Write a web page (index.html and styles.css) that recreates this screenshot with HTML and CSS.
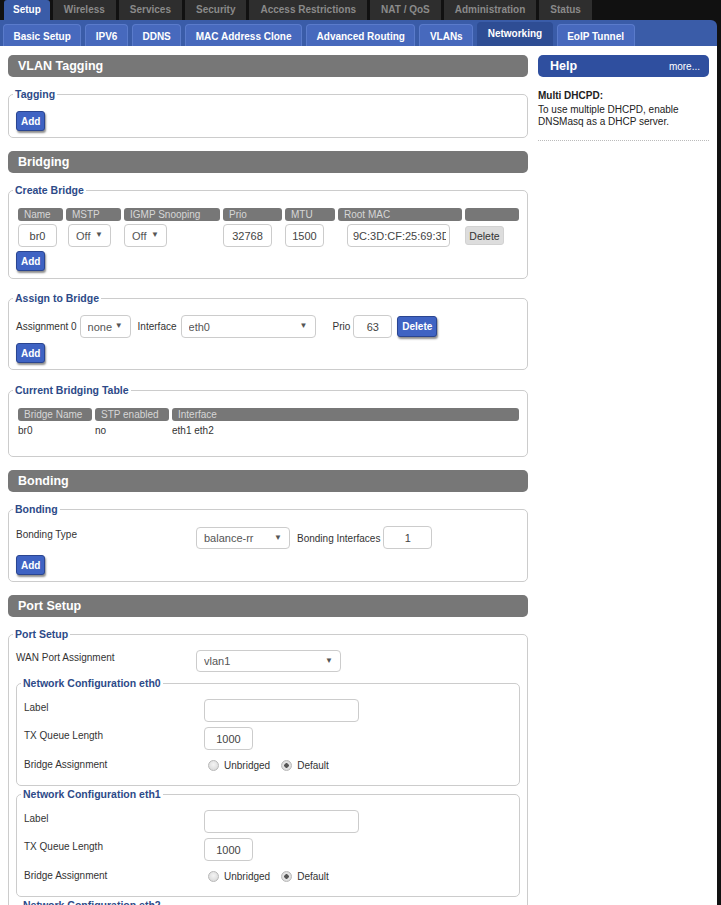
FILE: index.html
```html
<!DOCTYPE html>
<html lang="en">
<head>
    <meta charset="UTF-8">
    <meta name="viewport" content="width=device-width, initial-scale=1.0">
    <link rel="stylesheet" href="styles.css">
    <title>Networking</title>
</head>
<body>
<div class="page">
    <ul class="menu">
        <li class="on">Setup</li>
        <li>Wireless</li>
        <li>Services</li>
        <li>Security</li>
        <li>Access Restrictions</li>
        <li>NAT / QoS</li>
        <li>Administration</li>
        <li>Status</li>
    </ul>
    <ul class="submenu">
        <li>Basic Setup</li>
        <li>IPV6</li>
        <li>DDNS</li>
        <li>MAC Address Clone</li>
        <li>Advanced Routing</li>
        <li>VLANs</li>
        <li class="on">Networking</li>
        <li>EoIP Tunnel</li>
    </ul>

    <div class="main">
        <div class="content">
            <h2 class="sec">VLAN Tagging</h2>
            <fieldset>
                <legend>Tagging</legend>
                <div class="first"><button class="btn">Add</button></div>
            </fieldset>

            <h2 class="sec">Bridging</h2>
            <fieldset class="create">
                <legend>Create Bridge</legend>
                <div class="bridges">
                    <div class="th">Name</div>
                    <div class="th">MSTP</div>
                    <div class="th">IGMP Snooping</div>
                    <div class="th">Prio</div>
                    <div class="th">MTU</div>
                    <div class="th">Root MAC</div>
                    <div class="th"></div>

                    <div><input class="txt w39" value="br0"></div>
                    <div><span class="sel mstp"><select><option>Off</option></select></span></div>
                    <div><span class="sel w43"><select><option>Off</option></select></span></div>
                    <div><input class="txt w49" value="32768"></div>
                    <div><input class="txt w39" value="1500"></div>
                    <div><input class="txt mac" value="9C:3D:CF:25:69:3D"></div>
                    <div><button class="btn-grey">Delete</button></div>
                </div>
                <div class="next"><button class="btn">Add</button></div>
            </fieldset>

            <fieldset>
                <legend>Assign to Bridge</legend>
                <div class="assign first">
                    <span>Assignment 0</span>
                    <span class="sel assign-sel"><select><option>none</option></select></span>
                    <span class="assign-if">Interface</span>
                    <span class="sel if-sel"><select><option>eth0</option></select></span>
                    <span class="assign-prio">Prio</span>
                    <input class="txt w39 prio" value="63">
                    <button class="btn del">Delete</button>
                </div>
                <div class="next2"><button class="btn">Add</button></div>
            </fieldset>

            <fieldset class="current">
                <legend>Current Bridging Table</legend>
                <div class="bridge-table">
                    <div class="th">Bridge Name</div>
                    <div class="th">STP enabled</div>
                    <div class="th">Interface</div>
                    <div class="td">br0</div>
                    <div class="td">no</div>
                    <div class="td">eth1 eth2</div>
                </div>
            </fieldset>

            <h2 class="sec">Bonding</h2>
            <fieldset>
                <legend>Bonding</legend>
                <div class="row bond">
                    <div class="label">Bonding Type</div>
                    <span class="sel bond-sel"><select><option>balance-rr</option></select></span>
                    <span class="bond-if">Bonding Interfaces</span>
                    <input class="txt w49" value="1">
                </div>
                <div class="next3"><button class="btn">Add</button></div>
            </fieldset>

            <h2 class="sec">Port Setup</h2>
            <fieldset class="ports">
                <legend>Port Setup</legend>
                <div class="row wan">
                    <div class="label">WAN Port Assignment</div>
                    <span class="sel wan-sel"><select><option>vlan1</option></select></span>
                </div>

                <fieldset class="iface">
                    <legend>Network Configuration eth0</legend>
                    <div class="row r-label">
                        <div class="label">Label</div>
                        <input class="txt w155" value="">
                    </div>
                    <div class="row r-tx">
                        <div class="label">TX Queue Length</div>
                        <input class="txt w49" value="1000">
                    </div>
                    <div class="row r-bridge">
                        <div class="label">Bridge Assignment</div>
                        <div class="radios">
                            <input type="radio" name="br_eth0"> <span>Unbridged</span>
                            <input type="radio" name="br_eth0" checked> <span>Default</span>
                        </div>
                    </div>
                </fieldset>

                <fieldset class="iface">
                    <legend>Network Configuration eth1</legend>
                    <div class="row r-label">
                        <div class="label">Label</div>
                        <input class="txt w155" value="">
                    </div>
                    <div class="row r-tx">
                        <div class="label">TX Queue Length</div>
                        <input class="txt w49" value="1000">
                    </div>
                    <div class="row r-bridge">
                        <div class="label">Bridge Assignment</div>
                        <div class="radios">
                            <input type="radio" name="br_eth1"> <span>Unbridged</span>
                            <input type="radio" name="br_eth1" checked> <span>Default</span>
                        </div>
                    </div>
                </fieldset>

                <fieldset class="iface">
                    <legend>Network Configuration eth2</legend>
                    <div class="row r-label">
                        <div class="label">Label</div>
                        <input class="txt w155" value="">
                    </div>
                </fieldset>
            </fieldset>
        </div>

        <div class="help">
            <div class="help-head">
                <span class="help-title">Help</span>
                <span class="help-more">more...</span>
            </div>
            <div class="help-body">
                <b>Multi DHCPD:</b>
                To use multiple DHCPD, enable DNSMasq as a DHCP server.
            </div>
        </div>
    </div>
</div>
</body>
</html>
```

FILE: styles.css
```css
* {
    box-sizing: border-box;
}

body {
    margin: 0;
    background: #111;
    font-family: "Liberation Sans", Arial, sans-serif;
    font-size: 10px;
    color: #333;
}

.page {
    width: 717px;
}

/* top menu */
.menu {
    list-style: none;
    margin: 0;
    padding: 0 0 0 4px;
    height: 20px;
    display: flex;
    gap: 3px;
}

.menu li {
    padding: 0 11px;
    line-height: 20px;
    background: #2e2e2e;
    color: #8a8a8a;
    font-weight: bold;
}

.menu li.on {
    background: #3a5ca8;
    color: #fff;
    padding: 0 9px;
    border-radius: 3px 3px 0 0;
}

.submenu {
    list-style: none;
    margin: 0;
    padding: 0 0 0 3px;
    height: 26px;
    display: flex;
    align-items: flex-end;
    gap: 4px;
    background: #3a5ca8;
    border-top-right-radius: 6px;
}

.submenu li {
    height: 22px;
    line-height: 24px;
    padding: 0 9.5px;
    background: #4769bd;
    border: 1px solid #5a7bcb;
    border-bottom: 0;
    border-radius: 4px 4px 0 0;
    color: #fff;
    font-weight: bold;
}

.submenu li.on {
    height: 24px;
    line-height: 22px;
    background: #2e4d94;
    border-color: #2e4d94;
}

/* layout */
.main {
    background: #fff;
    display: flex;
    align-items: flex-start;
    padding: 9px 0 0 8px;
    min-height: 859px;
}

.content {
    width: 520px;
}

.help {
    width: 171px;
    margin-left: 10px;
}

.sec {
    margin: 0;
    height: 22px;
    line-height: 22px;
    padding-left: 10px;
    background: #777;
    color: #fff;
    font-size: 12.5px;
    font-weight: bold;
    border-radius: 5px;
}

fieldset + .sec {
    margin-top: 13px;
}

fieldset {
    margin: 11px 0 0;
    padding: 0 7px 6px;
    border: 1px solid #ccc;
    border-radius: 5px;
    min-width: 0;
}

fieldset + fieldset {
    margin-top: 13px;
}

fieldset.current {
    margin-top: 14px;
}

legend {
    margin-left: -3px;
    padding: 0 2px;
    color: #2d4a88;
    font-size: 10.5px;
    font-weight: bold;
    line-height: 12px;
}

.first {
    margin-top: 11px;
}

/* controls */
.btn {
    height: 20px;
    padding: 0 4px;
    background: #3f63c3;
    border: 1px solid #2a4591;
    border-radius: 3px;
    color: #fff;
    font-family: "Liberation Sans", Arial, sans-serif;
    font-size: 10px;
    font-weight: bold;
    box-shadow: 1px 2px 2px rgba(0, 0, 0, 0.45);
    cursor: pointer;
}

.btn-grey {
    height: 19px;
    width: 39px;
    padding: 0;
    margin-top: 2px;
    background: #ddd;
    border: 1px solid #d2d2d2;
    border-radius: 3px;
    color: #333;
    font-family: "Liberation Sans", Arial, sans-serif;
    font-size: 10.5px;
}

.txt {
    height: 23px;
    border: 1px solid #ccc;
    border-radius: 4px;
    padding: 0 3px;
    font-family: "Liberation Sans", Arial, sans-serif;
    font-size: 11px;
    color: #444;
    text-align: center;
    background: #fff;
}

.w39 { width: 39px; }
.w49 { width: 49px; }
.w155 { width: 155px; }

.mac {
    width: 103px;
    margin-left: 9px;
    text-align: left;
    padding-left: 5px;
}

.sel {
    position: relative;
    display: inline-block;
}

.sel select {
    appearance: none;
    -webkit-appearance: none;
    width: 100%;
    height: 22px;
    border: 1px solid #ccc;
    border-radius: 4px;
    background: #fff;
    padding: 0 0 0 7px;
    font-family: "Liberation Sans", Arial, sans-serif;
    font-size: 11px;
    color: #555;
}

.sel::after {
    content: "\25BC";
    position: absolute;
    right: 8px;
    top: 6px;
    font-size: 8px;
    color: #555;
    pointer-events: none;
}

.w43 { width: 43px; }
.mstp { width: 43px; margin-left: 2px; }

/* create bridge */
.create {
    padding-bottom: 7px;
}

.bridges {
    display: grid;
    grid-template-columns: 45px 55px 96px 59px 50px 124px 54px;
    column-gap: 3px;
    row-gap: 3px;
    margin: 12px 0 0 2px;
}

.th {
    height: 13px;
    line-height: 13px;
    padding-left: 6px;
    background: #777;
    color: #d6d6d6;
    border-radius: 3px;
    white-space: nowrap;
}

.bridges .sel select {
    height: 23px;
}

.next {
    margin-top: 4px;
}

/* assign to bridge */
.assign {
    display: flex;
    align-items: center;
    height: 23px;
}

.assign-sel { width: 51px; margin-left: 3px; }
.assign-if { margin-left: 7px; }
.if-sel { width: 135px; margin-left: 4px; }
.assign-prio { margin-left: 17px; }
.prio { margin-left: 3px; }
.del { margin-left: 5px; height: 21px; }

.assign .sel select {
    height: 23px;
}

.next2 {
    margin-top: 5px;
}

/* bridging table */
.bridge-table {
    display: grid;
    grid-template-columns: 74px 74px 347px;
    column-gap: 3px;
    margin: 12px 0 9px 2px;
}

.td {
    height: 20px;
    line-height: 20px;
}

/* form rows */
.row {
    display: flex;
    align-items: flex-start;
}

.label {
    width: 180px;
    flex: none;
    line-height: 18px;
}

.bond {
    margin-top: 11px;
}

.bond .label {
    line-height: 17px;
}

.bond-sel {
    width: 94px;
    margin-top: 1px;
}

.bond-if {
    margin-left: 7px;
    line-height: 23px;
    padding-top: 1px;
    margin-right: 3px;
}

.next3 {
    margin-top: 5px;
}

.wan {
    margin-top: 10px;
}

.wan .label {
    line-height: 16px;
}

.wan-sel {
    width: 145px;
}

.iface {
    margin-top: 5px;
    padding-bottom: 12px;
}

.iface + .iface {
    margin-top: 2px;
}

.r-label {
    margin-top: 10px;
}

.r-tx {
    margin-top: 5px;
}

.r-bridge {
    margin-top: 7px;
}

.r-bridge .label {
    line-height: 16px;
}

.radios {
    display: flex;
    align-items: center;
    height: 16px;
    padding-left: 4px;
}

.radios input {
    appearance: none;
    -webkit-appearance: none;
    width: 11px;
    height: 11px;
    margin: 0 5px 0 0;
    border: 1px solid #b8b8b8;
    border-radius: 50%;
    background: radial-gradient(circle at 50% 40%, #f4f4f4, #d4d4d4);
}

.radios input:checked {
    background: radial-gradient(circle, #555 0 2px, #e6e6e6 2.5px, #d0d0d0);
}

.radios span + input {
    margin-left: 11px;
}

/* help */
.help-head {
    height: 22px;
    padding: 0 9px 0 12px;
    display: flex;
    align-items: center;
    justify-content: space-between;
    background: #2f4f9f;
    border-radius: 5px;
    color: #fff;
}

.help-title {
    font-size: 12.5px;
    font-weight: bold;
}

.help-body {
    margin-top: 10px;
    padding-bottom: 12px;
    line-height: 12px;
    color: #222;
    border-bottom: 1px dotted #bbb;
}

.help-body b {
    display: block;
    font-size: 10px;
    line-height: 17px;
}
```
